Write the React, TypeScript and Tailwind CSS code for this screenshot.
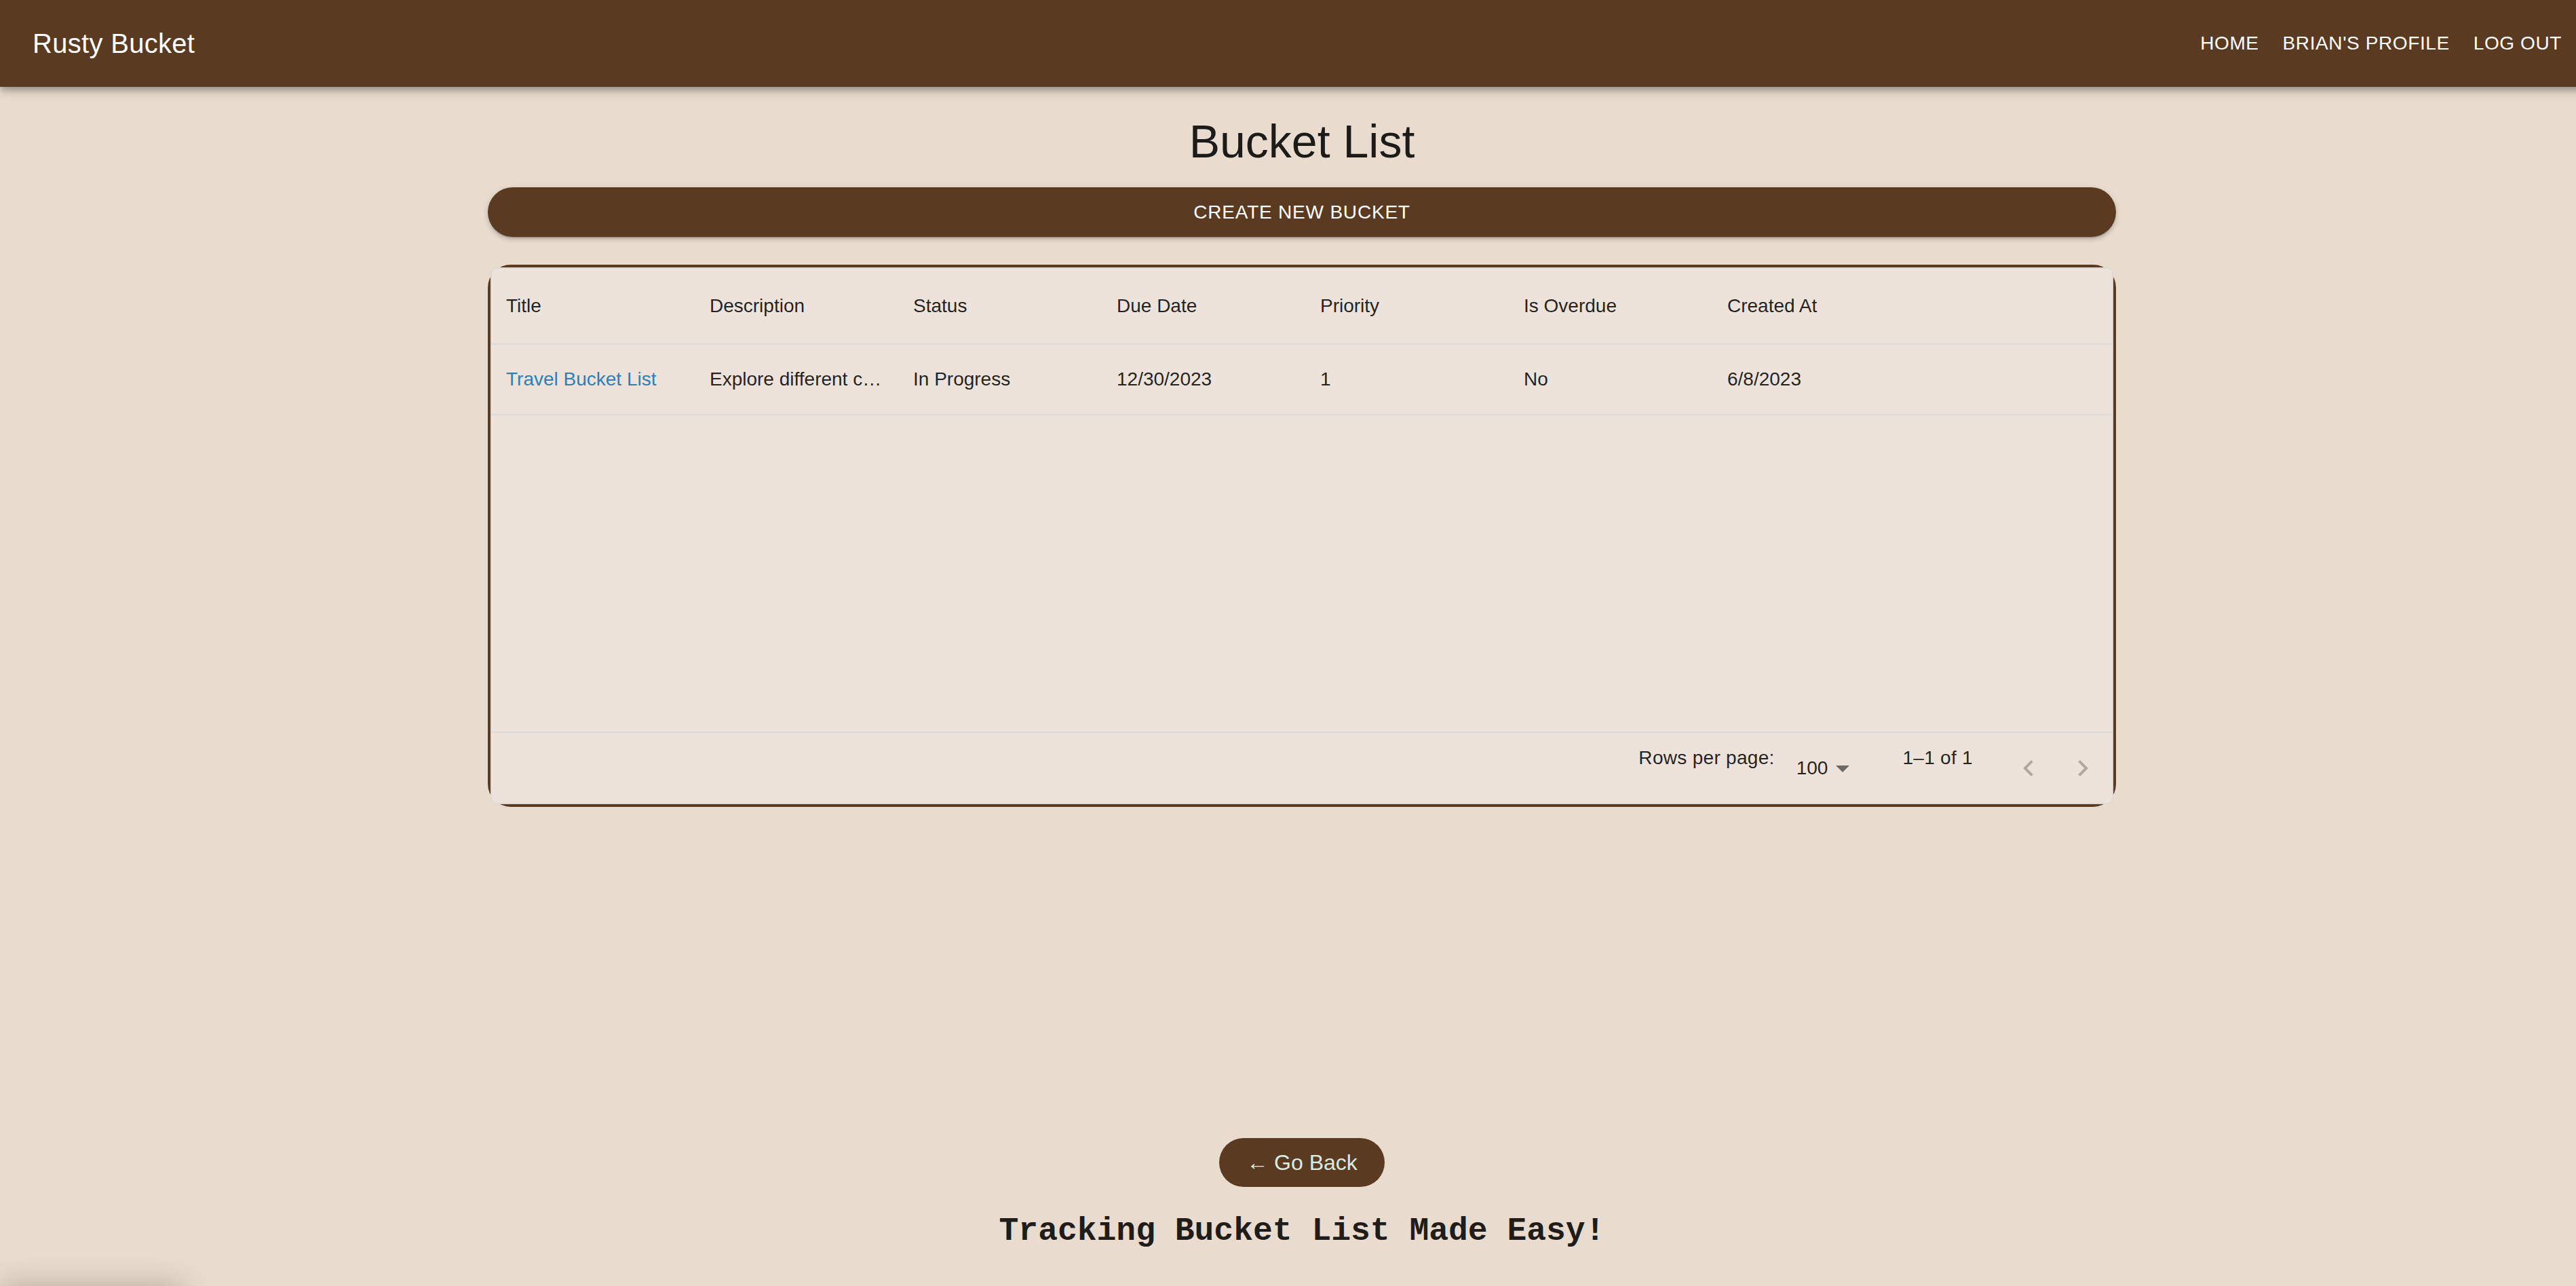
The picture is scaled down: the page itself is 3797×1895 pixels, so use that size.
import React from "react";

const cols = ["Title", "Description", "Status", "Due Date", "Priority", "Is Overdue", "Created At"];

export default function App() {
  return (
    <div
      className="relative h-[1895px] w-screen overflow-hidden bg-[#e9dccf] text-[rgba(0,0,0,0.87)]"
      style={{ fontFamily: '"Liberation Sans", Arial, Helvetica, sans-serif' }}
    >
      <div className="flex h-[1895px] w-[3838px] flex-col">
        {/* App bar */}
        <header className="relative z-10 flex h-[128px] shrink-0 items-center justify-between bg-[#5a3a21] pl-[48px] pr-[46px] text-white shadow-[0_4px_8px_-2px_rgba(0,0,0,0.2),0_8px_10px_0_rgba(0,0,0,0.14),0_2px_20px_0_rgba(0,0,0,0.12)]">
          <div className="text-[40px] leading-[48px] tracking-[0.3px]">Rusty Bucket</div>
          <nav className="flex items-center gap-[3px]">
            {["HOME", "BRIAN'S PROFILE", "LOG OUT"].map((t) => (
              <span key={t} className="px-[16px] py-[12px] text-[28px] leading-[40px] tracking-[0.6px]">
                {t}
              </span>
            ))}
          </nav>
        </header>

        {/* Main */}
        <main className="flex flex-col items-center">
          <h1 className="mt-[40px] text-[68px] leading-[80px] font-normal text-[#1c1b1a]">Bucket List</h1>
          <button className="mt-[28px] flex h-[73px] w-[2400px] items-center justify-center rounded-full bg-[#5a3a21] text-[28px] tracking-[0.8px] text-white shadow-[0_3px_2px_-2px_rgba(0,0,0,0.3),0_4px_6px_0_rgba(0,0,0,0.14),0_2px_10px_0_rgba(0,0,0,0.1)]">
            CREATE NEW BUCKET
          </button>

          <div className="mt-[41px] h-[799px] w-[2400px] rounded-[34px] border-[4px] border-[#5a3a21]">
            <div className="flex h-full flex-col rounded-[9px] border-[2px] border-[#dcd9d6] bg-[#ede3da] text-[28px]">
              {/* header */}
              <div className="flex h-[112px] shrink-0 items-center border-b-[2px] border-[#dcd9d6]">
                {cols.map((c) => (
                  <div key={c} className="w-[300px] shrink-0 px-[20px] pl-[21px] text-[rgba(0,0,0,0.87)]">
                    {c}
                  </div>
                ))}
              </div>
              {/* row */}
              <div className="flex h-[104px] shrink-0 items-center border-b-[2px] border-[#dcd9d6]">
                <div className="w-[300px] shrink-0 px-[20px] pl-[21px] text-[#2a80b9]">Travel Bucket List</div>
                <div className="w-[300px] shrink-0 truncate px-[20px] pl-[21px]">Explore different countries and cultures</div>
                <div className="w-[300px] shrink-0 px-[20px] pl-[21px]">In Progress</div>
                <div className="w-[300px] shrink-0 px-[20px] pl-[21px]">12/30/2023</div>
                <div className="w-[300px] shrink-0 px-[20px] pl-[21px]">1</div>
                <div className="w-[300px] shrink-0 px-[20px] pl-[21px]">No</div>
                <div className="w-[300px] shrink-0 px-[20px] pl-[21px]">6/8/2023</div>
              </div>
              <div className="flex-1" />
              {/* footer */}
              <div className="flex h-[105px] shrink-0 items-center justify-end border-t-[2px] border-[#dcd9d6] pr-[3px]">
                <span className="mb-[30px] leading-[40px] tracking-[0.3px]">Rows per page:</span>
                <div className="ml-[32px] flex items-center">
                  <span className="leading-[40px]">100</span>
                  <svg viewBox="0 0 24 24" className="ml-[-2px] h-[48px] w-[48px] fill-[rgba(0,0,0,0.54)]">
                    <path d="M7 10l5 5 5-5z" />
                  </svg>
                </div>
                <span className="mb-[30px] ml-[64px] leading-[40px] tracking-[0.3px]">1–1 of 1</span>
                <div className="ml-[42px] flex">
                  <div className="flex h-[80px] w-[80px] items-center justify-center">
                    <svg viewBox="0 0 24 24" className="h-[48px] w-[48px] fill-[rgba(0,0,0,0.26)]">
                      <path d="M15.41 7.41 14 6l-6 6 6 6 1.41-1.41L10.83 12z" />
                    </svg>
                  </div>
                  <div className="flex h-[80px] w-[80px] items-center justify-center">
                    <svg viewBox="0 0 24 24" className="h-[48px] w-[48px] fill-[rgba(0,0,0,0.26)]">
                      <path d="M10 6 8.59 7.41 13.17 12l-4.58 4.59L10 18l6-6z" />
                    </svg>
                  </div>
                </div>
              </div>
            </div>
          </div>
        </main>

        <div className="flex-1" />

        {/* Footer */}
        <footer className="flex flex-col items-center pb-[53px]">
          <button className="flex h-[72px] items-center justify-center rounded-full bg-[#5a3a21] px-[40px] text-[32px] text-[#dcebe2]">
            ← Go Back
          </button>
          <div
            className="mt-[37px] text-[48px] leading-[56px] font-bold text-[#1f1c1a]"
            style={{ fontFamily: '"Liberation Mono", "Courier New", monospace' }}
          >
            Tracking Bucket List Made Easy!
          </div>
        </footer>
      </div>

      <div className="fixed left-0 top-[1898px] h-[100px] w-[270px] rounded-[8px] shadow-[0_-2px_44px_rgba(60,40,20,0.3)]" />
    </div>
  );
}
